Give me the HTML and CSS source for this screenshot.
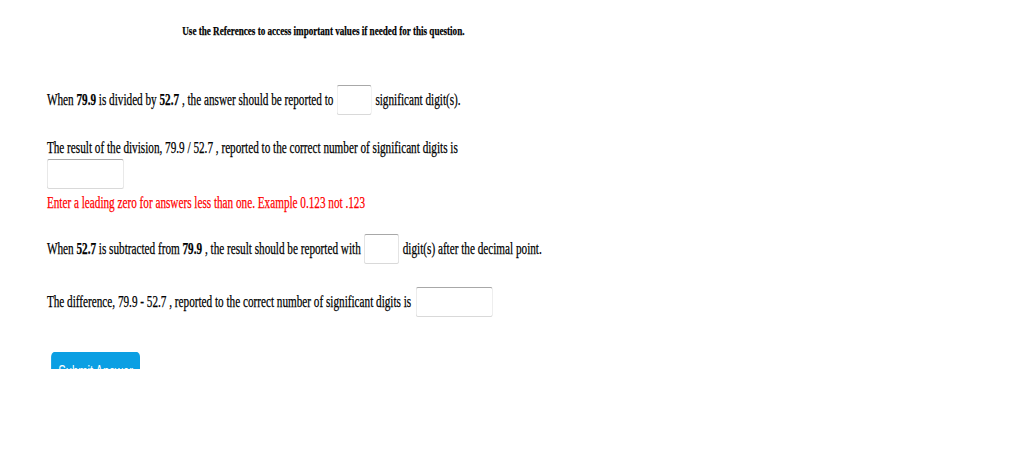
FILE: index.html
```html
<!DOCTYPE html>
<html>
<head>
<meta charset="utf-8">
<link rel="stylesheet" href="styles.css">
</head>
<body>
<div class="page">
  <div class="refs">Use the References to access important values if needed for this question.</div>

  <div class="row q1">
    <span>When <b>79.9</b> is divided by <b>52.7</b> , the answer should be reported to</span>
    <span class="box narrow"></span>
    <span>significant digit(s).</span>
  </div>

  <div class="q2">
    <div class="line">The result of the division, 79.9 / 52.7 , reported to the correct number of significant digits is</div>
    <span class="box wide"></span>
    <div class="hint">Enter a leading zero for answers less than one. Example 0.123 not .123</div>
  </div>

  <div class="row q3">
    <span>When <b>52.7</b> is subtracted from <b>79.9</b> , the result should be reported with</span>
    <span class="box narrow"></span>
    <span>digit(s) after the decimal point.</span>
  </div>

  <div class="row q4">
    <span>The difference, 79.9 - 52.7 , reported to the correct number of significant digits is</span>
    <span class="box wide"></span>
  </div>

  <button class="submit">Submit Answer</button>
</div>
</body>
</html>
```

FILE: styles.css
```css
html, body {
  margin: 0;
  padding: 0;
  background: #fff;
  overflow: hidden;
}

.page {
  width: 1463px;
  height: 369px;
  overflow: hidden;
  transform: scaleX(0.7);
  transform-origin: 0 0;
  font-family: "Liberation Serif", "Times New Roman", serif;
  font-size: 16px;
  color: #000;
  -webkit-text-stroke: 0.25px #000;
  padding-left: 67px;
  box-sizing: border-box;
  display: flex;
  flex-direction: column;
  align-items: flex-start;
}

.refs {
  width: 790px;
  text-align: center;
  font-weight: bold;
  font-size: 13px;
  line-height: 16px;
  margin-top: 23px;
}

.row {
  display: flex;
  align-items: center;
  gap: 5px;
  height: 30px;
}

.q1 { margin-top: 46px; }

.box {
  display: block;
  height: 30px;
  box-sizing: border-box;
  border: 1px solid #d9d9d9;
  border-top-color: #a8a8a8;
  border-radius: 3px;
  background: #fff;
}

.narrow { width: 50px; }
.wide { width: 110px; }
.q4 .box { margin-left: 2px; }

.q2 {
  margin-top: 23px;
  display: flex;
  flex-direction: column;
  align-items: flex-start;
}

.q2 .line { line-height: 20px; }
.q2 .box { margin-top: 1px; }

.hint {
  color: #f00;
  -webkit-text-stroke: 0.25px #f00;
  line-height: 20px;
  margin-top: 4px;
}

.q3 { margin-top: 21px; }
.q4 { margin-top: 23px; }

.submit {
  margin-top: 35px;
  margin-left: 6px;
  width: 127px;
  height: 36px;
  flex: none;
  border: none;
  border-radius: 5px;
  background: #0b9fe3;
  color: #fff;
  -webkit-text-stroke: 0;
  font-family: "Liberation Sans", Arial, sans-serif;
  font-size: 16px;
  padding: 3px 0 0;
  text-align: center;
  align-self: flex-start;
  box-sizing: border-box;
  line-height: 20px;
}
```
